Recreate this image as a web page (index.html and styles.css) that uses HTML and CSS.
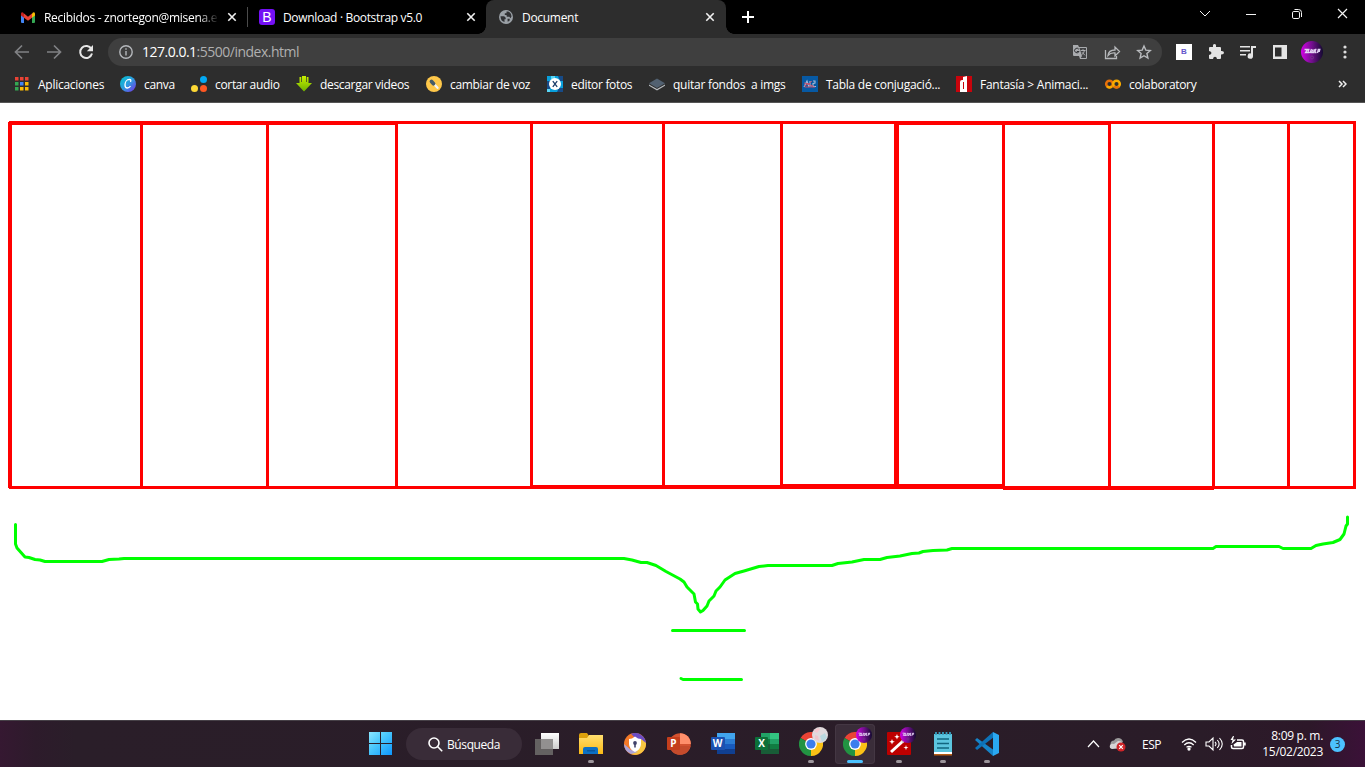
FILE: index.html
```html
<!DOCTYPE html>
<html lang="es">
<head>
<meta charset="utf-8">
<title>Document</title>
<link rel="stylesheet" href="styles.css">
</head>
<body>
<svg width="0" height="0" class="defs">
  <defs>
    <linearGradient id="gWin" gradientUnits="userSpaceOnUse" x1="0" y1="0" x2="24" y2="24"><stop offset="0" stop-color="#8be7ff"/><stop offset=".4" stop-color="#4cc8fb"/><stop offset="1" stop-color="#0893ff"/></linearGradient>
    <linearGradient id="gCanva" x1="0" y1="0" x2="1" y2="1"><stop offset="0" stop-color="#00c4cc"/><stop offset=".5" stop-color="#2f9be0"/><stop offset="1" stop-color="#7d2ae8"/></linearGradient>
    <linearGradient id="gUser" x1="0" y1="0" x2="1" y2="0"><stop offset="0" stop-color="#d400e8"/><stop offset=".5" stop-color="#71108c"/><stop offset="1" stop-color="#130a30"/></linearGradient>
    <linearGradient id="gDown" x1="0" y1="0" x2="0" y2="1"><stop offset="0" stop-color="#c8f000"/><stop offset="1" stop-color="#6eb000"/></linearGradient>
    <linearGradient id="gPanel" x1="0" y1="0" x2="0" y2="1"><stop offset="0" stop-color="#fff"/><stop offset="1" stop-color="#ccc"/></linearGradient>
    <linearGradient id="gFolder" x1="0" y1="0" x2="0" y2="1"><stop offset="0" stop-color="#ffdf70"/><stop offset="1" stop-color="#fbb914"/></linearGradient>
    <symbol id="x" viewBox="0 0 10 10"><path d="M1.300 1.300 8.700 8.700M8.700 1.300 1.300 8.700" stroke="#f1f1f1" stroke-width="1.600"/></symbol>
    <symbol id="user" viewBox="0 0 22 22"><circle cx="11" cy="11" r="11" fill="url(#gUser)"/><path d="M3.500 8.500h3l-2 3h3M8.500 8.500h-1l-.5 3h1.500M10.500 8l-1.500 4M12 8.500l-1.500 3h2l1-3.200M15.500 8.500h-1l-.5 3h1.500M16.500 12l.8-3.500h1.500l-.5 1.800h-1" stroke="#e3d3f3" stroke-width="1.300" fill="none"/><circle cx="11" cy="16.500" r="1.500" stroke="#79418d" stroke-width=".7" fill="none"/></symbol>
    <symbol id="chrome" viewBox="0 0 24 24"><path d="M12 12 1.600 6A12 12 0 0 1 22.400 6Z" fill="#ea4335"/><path d="M12 12 22.400 6A12 12 0 0 1 12 24Z" fill="#fbc116"/><path d="M12 12v12A12 12 0 0 1 1.600 6Z" fill="#229342"/><path d="M12 6.300V4l10.400 2 .1.300Z" fill="#ea4335"/><path d="M17.200 14.800 12 24V17Z" fill="#fbc116"/><path d="M12 24 16.800 15 12 17Z" fill="#fbc116"/><circle cx="12" cy="12" r="5.900" fill="#fff"/><circle cx="12" cy="12" r="4.600" fill="#3b7ded"/></symbol>
  </defs>
</svg>

<header class="tabs">
  <div class="tab tab-mail">
    <svg width="14" height="11" viewBox="0 0 14 11"><path d="M0 1.500V10q0 1 1 1h2V4.500Z" fill="#4285f4"/><path d="M14 1.500V10q0 1-1 1h-2V4.500Z" fill="#34a853"/><path d="M11 1.500 12 .5q2-.9 2 1.500v1.500l-3 2.300Z" fill="#fbbc04"/><path d="M3 1.500 7 4.700l4-3.200v4.300L7 8.800 3 5.800Z" fill="#ea4335"/><path d="M3 1.500 2 .5Q0-.4 0 2v1.500l3 2.300Z" fill="#c5221f"/></svg>
    <span class="tab-title fade">Recibidos - znortegon@misena.e</span>
    <svg class="close" width="10" height="10"><use href="#x"/></svg>
  </div>
  <i class="divider"></i>
  <div class="tab tab-boot">
    <b class="boot">B</b>
    <span class="tab-title">Download · Bootstrap v5.0</span>
    <svg class="close" width="10" height="10"><use href="#x"/></svg>
  </div>
  <div class="tab tab-doc">
    <svg width="14" height="14" viewBox="0 0 14 14"><circle cx="7" cy="7" r="7" fill="#9aa0a6"/><path d="M1.500 6.200h3.700l1.500 1.500v1.500H5.500v2.900Q1.500 11 1.500 6.200M7.500 1.500h1.700q3 1.200 3.300 5l-1 1.800-1.200-1.600H7.800L7.500 5H5.800V3.300h1.700ZM8.500 8.800h2.300l-.3 2-1.800 1Z" fill="#303134"/></svg>
    <span class="tab-title">Document</span>
    <svg class="close" width="10" height="10"><use href="#x"/></svg>
  </div>
  <svg class="plus" width="12" height="12" viewBox="0 0 12 12"><path d="M6 0v12M0 6h12" stroke="#fff" stroke-width="2"/></svg>
  <svg class="winctl" width="150" height="14" viewBox="0 0 150 14" fill="none" stroke="#f4f4f4" stroke-width="1"><path d="m1 4 5 5 5-5M47 7.500h10"/><rect x="93.500" y="4.500" width="7" height="7" rx="1.300"/><path d="M95.500 2.500h4q3 0 3 3v4.500"/><path d="m139 2 9 9m0-9-9 9" stroke-width="1.200"/></svg>
</header>

<nav class="toolbar">
  <svg class="nav-icons" width="80" height="16" viewBox="0 0 80 16" fill="none" stroke="#808184" stroke-width="1.700"><path d="M15 8H2M8 1.500 1.500 8 8 14.500M33 8h13M40 1.500 46.500 8 40 14.500"/><path d="M77.400 5A6 6 0 1 0 78 9.600" stroke="#e6e6e6" stroke-width="2"/><path d="M79 1v6.200h-6.200Z" fill="#e6e6e6" stroke="none"/></svg>
  <div class="omnibox">
    <svg width="14" height="14" viewBox="0 0 14 14" fill="none" stroke="#b5b8bc" stroke-width="1.400"><circle cx="7" cy="7" r="6.200"/><path d="M7 6v4.500M7 3.300v1.500"/></svg>
    <span class="url"><em>127.0.0.1</em>:5500/index.html</span>
    <svg class="omni-icons" width="80" height="16" viewBox="0 0 80 16"><path d="M1 1h5l1 2h7q1 0 1 1v10q0 1-1 1H8l-1-3H2q-1 0-1-1Z" fill="#a9abae"/><path d="M7.500 4H14v10H8.800l1.200-2Z" fill="#424345"/><path d="M6.800 5.200A2.300 2.300 0 1 0 7 7.500H4.800" fill="none" stroke="#303134"/><path d="M8.600 6.500h5M11 5.200v1.300m-1.200 4.300q2-1.500 2.700-4.300M10 8.300l3 3" fill="none" stroke="#b5b7ba" stroke-width=".9"/><path d="M33.500 6v8.500h11V12M36 11.500q.5-5.500 7-5.500V3l4.500 4.500L43 12V9q-4.500-.5-7 2.500Z" fill="none" stroke="#b6b8bb" stroke-width="1.300"/><path d="m72 2 1.800 4.100 4.500.4-3.400 3 1 4.500L72 11.700 68.100 14l1-4.500-3.400-3 4.500-.4Z" fill="none" stroke="#b9bbbe" stroke-width="1.400"/></svg>
  </div>
  <b class="ext-b">B</b>
  <svg class="ext" width="84" height="16" viewBox="0 0 84 16" fill="#e4e4e4"><path d="M2 3h3q-.5-3 1.500-3T8 3h4q1 0 1 1v3q3-.3 3 1.700T13 10.500V14q0 1-1 1H9q-.3-2.300-2-2.300T5 15H2q-1 0-1-1v-3q2.500-.3 2.500-2T1 7V4q0-1 1-1Z"/><path d="M32 2h10v1.600H32Zm0 4h10v1.600H32Zm0 4h6v1.600h-6ZM43 2h5v2h-3v8a2.700 2.700 0 1 1-2-2.500Z"/><path d="M65 1h14v14H65ZM67 3.500v9h6.500v-9Z" fill-rule="evenodd"/></svg>
  <svg class="avatar" width="22" height="22"><use href="#user"/></svg>
  <svg class="dots" width="4" height="14" viewBox="0 0 4 14" fill="#ddd"><circle cx="2" cy="2" r="1.600"/><circle cx="2" cy="7" r="1.600"/><circle cx="2" cy="12" r="1.600"/></svg>
</nav>

<nav class="bookmarks">
  <div class="bm w1"><svg viewBox="0 0 16 16"><path d="M1 1h3.500v3.500H1Zm5 0h3.500v3.500H6Zm5 0h3.500v3.500H11Z" fill="#ea4335"/><path d="M1 6h3.500v3.500H1Zm0 5h3.500v3.500H1Z" fill="#34a853"/><path d="M6 6h3.500v3.500H6Z" fill="#4285f4"/><path d="M11 6h3.500v3.500H11ZM6 11h3.500v3.500H6Zm5 0h3.500v3.500H11Z" fill="#fbbc04"/></svg><span>Aplicaciones</span></div>
  <div class="bm w2"><svg viewBox="0 0 16 16"><circle cx="8" cy="8" r="8" fill="url(#gCanva)"/><path d="M10.500 6q1-2.500-1-2.600C6.500 3.500 5 6.500 5 9q0 3 2.300 3 1.800 0 3.200-2" fill="none" stroke="#fff" stroke-width="1.300"/></svg><span>canva</span></div>
  <div class="bm w3"><svg viewBox="0 0 16 16"><circle cx="12.500" cy="3.500" r="3.500" fill="#03a9f4"/><circle cx="3.500" cy="12.500" r="3.500" fill="#fdd835"/><circle cx="12.500" cy="12.500" r="3.500" fill="#ff5722"/></svg><span>cortar audio</span></div>
  <div class="bm w4"><svg viewBox="0 0 16 16"><path d="M0 7h3.500V1h1.800v5h.7V0h4v6h.7V1h1.800v6H16l-8 8.500Z" fill="url(#gDown)"/></svg><span>descargar videos</span></div>
  <div class="bm w5"><svg viewBox="0 0 16 16"><circle cx="8" cy="8" r="8" fill="#ffc84a"/><path d="m7 7 4.500 4.800" stroke="#f4f4f4" stroke-width="2.300" stroke-linecap="round"/><path d="m5.500 5.500 2 2.200" stroke="#475c68" stroke-width="3.800" stroke-linecap="round"/></svg><span>cambiar de voz</span></div>
  <div class="bm w6"><svg viewBox="0 0 16 16"><path d="M0 0h16v16H0Z" fill="#099fdb"/><path d="M0 5h3v8H0ZM11 0h5v5h-3ZM12 12h4v4h-6Z" fill="#174b87"/><path d="M4 0h4v3H4ZM0 13h3v3H0Z" fill="#58d6f6"/><circle cx="8" cy="8" r="6" fill="#fff"/><path d="m5.800 5.200 4.400 5.600m0-5.600-4.400 5.600" stroke="#183c69" stroke-width="1.300"/></svg><span>editor fotos</span></div>
  <div class="bm w7"><svg viewBox="0 0 16 16"><path d="M0 8.500 8 13l8-4.500v1.300L8 14.500 0 9.800Z" fill="#b7bcc0"/><path d="m8 2.500 8 4.800-8 4.800-8-4.800Z" fill="#526171"/></svg><span>quitar fondos&nbsp; a imgs</span></div>
  <div class="bm w8"><svg viewBox="0 0 16 16"><path d="M0 0h16v16H0Z" fill="#0759a3"/><path d="m2 11 3-6 2 6M8 5v5h2M11 5h2v2l-2 .5v3h3" fill="none" stroke="#a9bcd8" stroke-width="1.100"/><path d="m2 7 5 1 3-3M2 10l4-2 5 2M3 11h10" fill="none" stroke="#cf4964" stroke-width=".9"/></svg><span>Tabla de conjugació...</span></div>
  <div class="bm w9"><svg viewBox="0 0 16 16"><path d="M0 0h16v16H0Z" fill="#c9040c"/><path d="M4 6q0-2 2-2h1V1l4-1v16H4ZM7 6v7h1V6Z" fill="#fff" fill-rule="evenodd"/></svg><span>Fantasía &gt; Animaci...</span></div>
  <div class="bm w10"><svg viewBox="0 0 16 16" fill="none" stroke-width="2.500"><circle cx="4.500" cy="8" r="3.300" stroke="#e8710a"/><circle cx="11.500" cy="8" r="3.300" stroke="#f9ab00"/><path d="M2 10.300a3.300 3.300 0 0 0 5 0" stroke="#f9ab00"/><path d="M9 10.300a3.300 3.300 0 0 0 5 0" stroke="#e8710a"/></svg><span>colaboratory</span></div>
  <svg class="more" viewBox="0 0 9 8" width="9" height="8" fill="none" stroke="#eee" stroke-width="1.500"><path d="m1 1 3 3-3 3m4-6 3 3-3 3"/></svg>
</nav>

<main class="canvas">
<svg width="1365" height="617" viewBox="0 103 1365 617">
  <g fill="#f00">
    <path d="M9 121h387v4H9ZM396 121h960v3H396ZM896 121h213v4H896Z"/>
    <path d="M8 122h4v366H8ZM140 122h3v366h-3ZM266 122h3v366h-3ZM395 122h3v366h-3ZM530 122h3v366h-3ZM662 122h3v366h-3ZM780 122h3v365h-3ZM894 122h5v365h-5ZM1002 122h3v367h-3ZM1108 122h3v366h-3ZM1212 122h3v367h-3ZM1287 122h3v366h-3ZM1353 122h3v367h-3Z"/>
    <path d="M9 486h1346v3H9ZM531 485h250v4H531ZM781 484h223v5H781ZM1003 486h211v4h-211Z"/>
  </g>
  <g fill="none" stroke="#0f0" stroke-width="3" stroke-linecap="round" stroke-linejoin="round">
    <path d="M15.500 524.500V544L17 548 25 557 29 557.500 35 559.500 40 560 45 561.500H102L109 559.500 119 559 124 558.500H624L632 560 641 562.500H647L656 565.500 666 571.500 680 579 684 582 687 587 694 594 695.500 602 697.500 604 698 609 700.500 612 703 610.500 707 606 709 601 714 596 716 591 720 587 725 580 735 573.500 744 571 759 566.500 768 565.500H832L838 563.500 852 562 864 559.500H880L887 557.500 900 556 912 553.500 919 553 923 551.500 933 550.500 947 550 952 548.500H1213L1216 546.500H1279L1283 548.500H1311L1316 545.500 1323 544 1333 542.500 1340 539.500 1344 534 1346 526 1347.500 524V517"/>
    <path d="M672.500 630.500h72M681 678.500l2 1h58.500"/>
  </g>
</svg>
</main>

<footer class="taskbar">
  <div class="start"><svg width="24" height="24" viewBox="0 0 24 24" fill="url(#gWin)"><path d="M0 0h11v11H0Zm12 0h11v11H12ZM0 12h11v11H0Zm12 0h11v11H12Z"/></svg></div>
  <div class="search"><svg width="15" height="15" viewBox="0 0 15 15" fill="none" stroke="#fff" stroke-width="1.600"><circle cx="6" cy="6" r="5"/><path d="m9.500 9.500 4.700 4.700"/></svg><span>Búsqueda</span></div>
  <div class="apps">
    <div class="app"><svg viewBox="0 0 24 24"><path d="M6 1h18v16H6Z" fill="url(#gPanel)"/><path d="M0 7h18v16H0Z" fill="#646161"/><path d="M6 7h12v10H6Z" fill="#929090"/></svg></div>
    <div class="app run"><svg viewBox="0 0 24 24"><path d="M0 3q0-2 2-2h6l2 3v4H0Z" fill="#dca10c"/><path d="M0 6h8l2-3h14v19H0Z" fill="url(#gFolder)"/><path d="M4 22v-5q0-2 2-2h11q2 0 2 2v5Z" fill="#0c70c4"/><path d="M8 18h8v1.500H8Z" fill="#09569c"/></svg></div>
    <div class="app"><svg viewBox="0 0 24 24"><circle cx="12" cy="12" r="11" fill="#f47a28"/><path d="M8 1.700A11 11 0 0 1 23 12L13 7Z" fill="#6b4dc4"/><path d="M23 11A11 11 0 0 1 8 22l8-6 2-9Z" fill="#f7c642"/><path d="M8 22A11 11 0 0 1 1 12l7 6 7 2Z" fill="#aaa3d8"/><path d="M6 7q3 0 6-2.500Q15 7 18 7v5q0 5-6 8-6-3-6-8Z" fill="#fff"/><circle cx="12" cy="11" r="1.900" fill="#40436b"/><path d="M11.200 11h1.600v4.500h-1.600Z" fill="#40436b"/></svg></div>
    <div class="app office"><svg viewBox="0 0 24 24"><circle cx="13" cy="12" r="10.800" fill="#d35230"/><path d="M13 1.200A10.800 10.800 0 0 1 23.800 12H13Z" fill="#ff8f6b"/><path d="M2.500 14h21.200A10.800 10.800 0 0 1 2.500 14Z" fill="#c54b2c"/><rect y="5" width="13" height="13" rx="1" fill="#c43e1c"/></svg><b>P</b></div>
    <div class="app office"><svg viewBox="0 0 24 24"><path d="M6 1h18v6H6Z" fill="#41a5ee"/><path d="M6 7h18v5H6Z" fill="#2b7cd3"/><path d="M6 12h18v5H6Z" fill="#185abd"/><path d="M6 17h18v5H6Z" fill="#103f91"/><rect y="5" width="14" height="13" rx="1" fill="#1b51b0"/></svg><b>W</b></div>
    <div class="app office"><svg viewBox="0 0 24 24"><path d="M6 1h9v6H6Z" fill="#21a366"/><path d="M15 1h9v6h-9Z" fill="#33c481"/><path d="M6 7h9v5H6Z" fill="#107c41"/><path d="M15 7h9v5h-9Z" fill="#21a366"/><path d="M6 12h18v10H6Z" fill="#185c37"/><path d="M15 12h9v5h-9Z" fill="#107c41"/><rect y="5" width="13" height="13" rx="1" fill="#0c7038"/></svg><b>X</b></div>
    <div class="app run"><svg viewBox="0 0 24 24"><use href="#chrome" width="24" height="24"/></svg><svg class="badge" viewBox="0 0 16 16"><circle cx="8" cy="8" r="8" fill="#e0dadd"/><path d="M2 4q3-4 6-2L5 6Z" fill="#f4c8cf"/><path d="m8 9 5-3 2 5-5 4Z" fill="#b9d8df"/><path d="m3 8 3 1 1 5-4-2Z" fill="#edc6cb"/></svg></div>
    <div class="app run active"><svg viewBox="0 0 24 24"><use href="#chrome" width="24" height="24"/></svg><svg class="badge"><use href="#user"/></svg></div>
    <div class="app run"><svg viewBox="0 0 24 24"><rect y="0" width="24" height="23" rx="1" fill="#bd0000"/><path d="M4 20 15.500 9.500" stroke="#fff" stroke-width="3"/><path d="m15 10 3-2.500" stroke="#ccc" stroke-width="3"/><path d="m5 7 .8 2 2 .8-2 .7-.8 2-.8-2-2-.7 2-.8ZM10 2l.7 2 2 .7-2 .8-.7 2-.8-2-2-.8 2-.7ZM19 13l.6 2 1.900.5-1.900.8-.6 2-.6-2-2-.8 2-.5Z" fill="#fff"/></svg><svg class="badge"><use href="#user"/></svg></div>
    <div class="app run"><svg viewBox="0 0 24 24"><rect x="3" y="2" width="18" height="19" fill="#5cc5df"/><path d="M3 20h18v2H3Z" fill="#fff"/><path d="M3 22h18v1.500H3Z" fill="#b85c13"/><path d="M5 0v3m3.500-3v3M12 0v3m3.500-3v3M19 0v3" stroke="#37a0bf" stroke-width="1.800"/><path d="M6 7h12M6 11.500h12M6 16h12" stroke="#11657f" stroke-width="1.700"/></svg></div>
    <div class="app run"><svg viewBox="0 0 24 24"><path d="m0 8 2-2 18 13-2 5Z" fill="#1684c9"/><path d="m0 16 2 2L19 5 18 0Z" fill="#0d72b8"/><path d="m18 0 6 3v18l-6 3Z" fill="#2aa8f1"/></svg></div>
  </div>
  <div class="tray">
    <svg width="40" height="18" viewBox="0 0 40 18"><path d="m1 12 5.500-6L12 12" fill="none" stroke="#fff" stroke-width="1.200"/><path d="M23.500 9q0-3.500 3.500-3.500Q28 3 31 3q4 0 5 4l-10 4Z" fill="#9b9a9b"/><path d="M25 14q-3-.4-2-4 1-2 4-1l4-3q5 0 5 4v3Z" fill="#d6d5d6"/><circle cx="34" cy="12" r="4.500" fill="#cf2428"/><path d="m32.200 10.200 3.600 3.600m0-3.600-3.600 3.600" stroke="#fff" stroke-width="1.200"/></svg>
    <span class="lang">ESP</span>
    <svg class="status" width="66" height="16" viewBox="0 0 66 16" fill="none" stroke="#fff" stroke-width="1.300"><path d="M1 6.500q7-7 14 0M3.300 9q4.700-4.500 9.400 0M5.500 11.300q2.500-2 5 0"/><circle cx="8" cy="13" r="1" fill="#fff"/><path d="M25 6h3l4-4v12l-4-4h-3Z M34 6q2 2 0 4M36.300 4q3.700 4 0 8M38.500 2q5.500 6 0 12" stroke-width="1.100"/><path d="M56 4h5q1.500 0 1.500 1.500V11q0 1.500-1.500 1.500H52q-1.500 0-1.500-1.500V9M64 6.500v3" stroke-width="1.500"/><path d="M56 6h4.500v4.500H53L52.500 8.500Z" fill="#fff" stroke="none"/><path d="m52 0-2.500 4h2l-1 4L55 3.500h-3L53 0Z" fill="#fff" stroke="none"/></svg>
    <div class="clock"><span>8:09 p. m.</span><span>15/02/2023</span></div>
    <b class="count">3</b>
  </div>
</footer>
</body>
</html>
```
FILE: styles.css
```css
* { box-sizing: border-box; }
body { margin: 0; width: 1365px; height: 767px; overflow: hidden; background: #fff; display: flex; flex-direction: column; font-family: "Open Sans", "Noto Sans", sans-serif; font-size: 12px; color: #fff; }
svg { display: block; flex: none; }
span { white-space: nowrap; }
.defs { position: absolute; }
.tabs { height: 34px; background: #000; display: flex; align-items: center; }
.tab { height: 34px; display: flex; align-items: center; flex: none; padding-bottom: 1px; }
.tab-title { letter-spacing: -.3px; }
.close { margin-left: auto; }
.tab-mail { width: 247px; padding: 0 10px 0 21px; }
.tab-mail .tab-title { margin-left: 9px; width: 175px; overflow: hidden; }
.fade { -webkit-mask-image: linear-gradient(90deg, #000 88%, transparent 100%); mask-image: linear-gradient(90deg, #000 88%, transparent 100%); }
.divider { width: 1px; height: 20px; background: #4b4b4b; }
.tab-boot { width: 238px; padding: 0 10px 0 11px; }
.boot { width: 16px; height: 16px; background: #7410f5; border-radius: 3px; text-align: center; font: 14px/16px "Liberation Sans", sans-serif; }
.boot + .tab-title { margin-left: 8px; letter-spacing: -.34px; }
.tab-doc { width: 240px; padding: 0 11px 0 13px; background: #2d2d2d; border-radius: 8px 8px 0 0; position: relative; }
.tab-doc::before, .tab-doc::after { content: ""; position: absolute; bottom: 0; width: 8px; height: 8px; }
.tab-doc::before { left: -8px; background: radial-gradient(circle at 0 0, transparent 7.5px, #2d2d2d 8px); }
.tab-doc::after { right: -8px; background: radial-gradient(circle at 100% 0, transparent 7.5px, #2d2d2d 8px); }
.tab-doc .tab-title { margin-left: 9px; }
.plus { margin-left: 16px; }
.winctl { margin-left: auto; margin-right: 16px; margin-bottom: 6px; }
.toolbar { height: 36px; background: #2d2d2d; display: flex; align-items: center; }
.nav-icons { margin-left: 14px; }
.omnibox { width: 1054px; height: 28px; margin-left: 14px; border-radius: 14px; background: #3f3f3f; display: flex; align-items: center; padding-left: 11px; }
.url { margin-left: 9px; font-size: 14px; color: #b0b0b0; letter-spacing: -.5px; padding-bottom: 1px; }
.url em { font-style: normal; color: #fff; }
.omni-icons { margin-left: auto; margin-right: 10px; }
.ext-b { width: 16px; height: 16px; margin-left: 14px; background: #fff; color: #6354cb; text-align: center; font: bold 8px/16px "Liberation Sans", sans-serif; }
.ext { margin-left: 16px; }
.avatar { margin-left: 9px; }
.dots { margin-left: 20px; }
.bookmarks { height: 33px; background: #2d2d2d; border-bottom: 1px solid #555; display: flex; align-items: center; padding: 0 18px 4px 14px; }
.bm { display: flex; align-items: center; gap: 8px; flex: none; letter-spacing: -.32px; }
.bm svg { width: 16px; height: 16px; }
.w1 { width: 106px; } .w2 { width: 71px; } .w3 { width: 105px; } .w4 { width: 130px; } .w5 { width: 121px; }
.w6 { width: 102px; } .w7 { width: 153px; } .w8 { width: 154px; } .w9 { width: 149px; } .w10 { width: 100px; }
.w1, .w7, .w8, .w9 { letter-spacing: -.26px; }
.more { margin-left: auto; }
.canvas { height: 617px; flex: none; }
.taskbar { height: 47px; border-top: 1px solid #464047; background: linear-gradient(90deg, #351831 0, #2d1b2b 35px, #2a1e29 75px, #2a1c28 1200px, #2d1829 1310px, #3b1138 1365px); display: flex; align-items: center; }
.start { margin-left: 369px; }
.search { width: 116px; height: 32px; margin-left: 13px; border-radius: 16px; background: #392c38; display: flex; align-items: center; padding-left: 22px; gap: 4px; letter-spacing: -.4px; }
.apps { display: flex; margin-left: 5px; gap: 4px; }
.app { width: 40px; height: 40px; position: relative; display: flex; justify-content: center; padding-top: 8px; border-radius: 4px; }
.app > svg:first-child { width: 24px; height: 24px; }
.app .badge { position: absolute; width: 16px; height: 16px; right: 3px; top: 3px; }
.run::after { content: ""; position: absolute; width: 6px; height: 3px; border-radius: 2px; background: #9c959b; left: 17px; bottom: 1px; }
.active { background: #3a2d39; box-shadow: inset 0 0 0 1px #443743; }
.active::after { width: 16px; left: 12px; background: #4cc2ff; }
.office b { position: absolute; left: 8px; top: 12px; width: 13px; text-align: center; font: bold 10px/15px "Open Sans", sans-serif; }
.tray { margin-left: auto; display: flex; align-items: center; padding-right: 20px; }
.lang { margin-left: 15px; width: 21px; font-size: 12px; letter-spacing: -.5px; }
.status { margin-left: 18px; }
.clock { width: 76px; display: flex; flex-direction: column; text-align: right; line-height: 16px; letter-spacing: -.3px; }
.count { width: 15px; height: 15px; margin-left: 7px; border-radius: 50%; background: #4cc2ff; color: #17324a; font: 10px/15px "Open Sans", sans-serif; text-align: center; }
```
